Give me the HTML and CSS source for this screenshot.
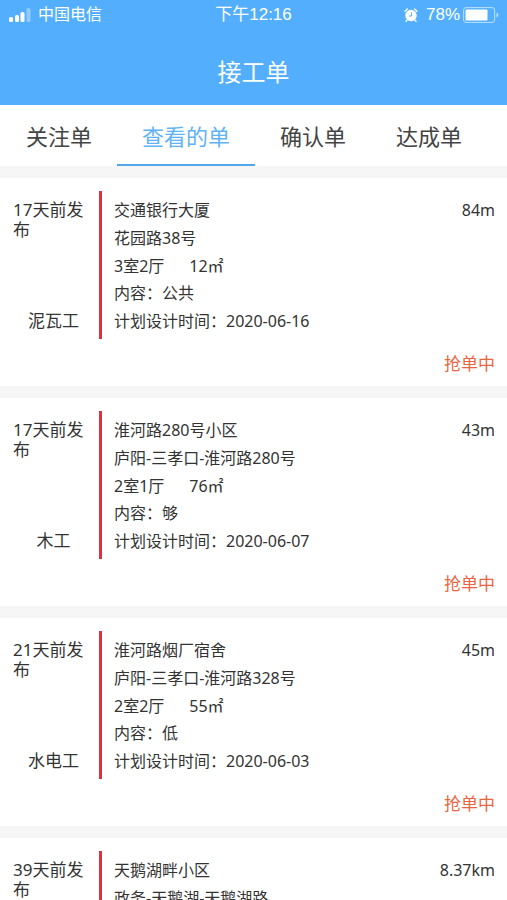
FILE: index.html
```html
<!DOCTYPE html>
<html lang="zh-CN">
<head>
    <meta charset="UTF-8">
    <meta name="viewport" content="width=device-width, initial-scale=1.0">
    <title>接工单</title>
    <link rel="stylesheet" href="styles.css">
</head>
<body>
    <div class="page">
        <header class="header">
            <div class="status-bar">
                <div class="carrier">
                    <svg class="signal" width="24" height="16" viewBox="0 0 24 16" fill="#fff">
                        <rect x="1" y="10" width="4" height="5" rx="1.5"/>
                        <rect x="7" y="8" width="4" height="7" rx="1.5"/>
                        <rect x="12.5" y="5" width="4" height="10" rx="1.5"/>
                        <rect x="18.5" y="1" width="4" height="14" rx="1.5" opacity=".35"/>
                    </svg>
                    <span>中国电信</span>
                </div>
                <span class="clock">下午12:16</span>
                <div class="power">
                    <svg class="alarm" width="14" height="14" viewBox="0 0 14 14">
                        <circle cx="7" cy="7.5" r="5.7" fill="#fff"/>
                        <path d="M1 3.2 3.4 1M13 3.2 10.6 1M3 12.2 2 13.4M11 12.2l1 1.2" stroke="#fff" stroke-width="1.4" stroke-linecap="round"/>
                        <path d="M7.6 4.4V8H4.8" fill="none" stroke="#53affe" stroke-width="1"/>
                    </svg>
                    <span class="percent">78%</span>
                    <svg class="battery" width="36" height="16" viewBox="0 0 36 16">
                        <rect x=".6" y=".6" width="31" height="14.8" rx="2.5" fill="none" stroke="#fff" stroke-opacity=".6"/>
                        <rect x="2.5" y="2.5" width="22" height="11" rx="1" fill="#fff"/>
                        <path d="M33.5 5.5c2.4.8 2.4 4.2 0 5z" fill="#fff" opacity=".6"/>
                    </svg>
                </div>
            </div>
            <h1 class="title">接工单</h1>
        </header>

        <nav class="tabs">
            <a href="#" class="tab">关注单</a>
            <a href="#" class="tab active">查看的单</a>
            <a href="#" class="tab">确认单</a>
            <a href="#" class="tab">达成单</a>
        </nav>

        <main class="list">
            <article class="card">
                <div class="card-body">
                    <div class="side">
                        <p>17天前发布</p>
                        <p class="job">泥瓦工</p>
                    </div>
                    <div class="info">
                        <p>交通银行大厦</p>
                        <p>花园路38号</p>
                        <p>3室2厅<span class="area">12㎡</span></p>
                        <p>内容：公共</p>
                        <p>计划设计时间：2020-06-16</p>
                    </div>
                    <span class="distance">84m</span>
                </div>
                <p class="state">抢单中</p>
            </article>

            <article class="card">
                <div class="card-body">
                    <div class="side">
                        <p>17天前发布</p>
                        <p class="job">木工</p>
                    </div>
                    <div class="info">
                        <p>淮河路280号小区</p>
                        <p>庐阳-三孝口-淮河路280号</p>
                        <p>2室1厅<span class="area">76㎡</span></p>
                        <p>内容：够</p>
                        <p>计划设计时间：2020-06-07</p>
                    </div>
                    <span class="distance">43m</span>
                </div>
                <p class="state">抢单中</p>
            </article>

            <article class="card">
                <div class="card-body">
                    <div class="side">
                        <p>21天前发布</p>
                        <p class="job">水电工</p>
                    </div>
                    <div class="info">
                        <p>淮河路烟厂宿舍</p>
                        <p>庐阳-三孝口-淮河路328号</p>
                        <p>2室2厅<span class="area">55㎡</span></p>
                        <p>内容：低</p>
                        <p>计划设计时间：2020-06-03</p>
                    </div>
                    <span class="distance">45m</span>
                </div>
                <p class="state">抢单中</p>
            </article>

            <article class="card">
                <div class="card-body">
                    <div class="side">
                        <p>39天前发布</p>
                    </div>
                    <div class="info brief">
                        <p>天鹅湖畔小区</p>
                        <p>政务-天鹅湖-天鹅湖路</p>
                    </div>
                    <span class="distance">8.37km</span>
                </div>
            </article>
        </main>
    </div>
</body>
</html>
```
FILE: styles.css
```css
* {
    box-sizing: border-box;
}
body {
    margin: 0;
    background: #f6f6f6;
    color: #333;
    font-family: "Noto Sans", "Noto Sans CJK SC", sans-serif;
    font-size: 16px;
    line-height: 20px;
}
p, h1 {
    margin: 0;
}
.page {
    display: flex;
    flex-direction: column;
    height: 100vh;
}

/* header */
.header {
    flex: none;
    background: #53affe;
    color: #fff;
}
.status-bar {
    display: grid;
    grid-template-columns: 1fr auto 1fr;
    align-items: center;
    height: 30px;
    padding: 0 8px;
    font-family: "Liberation Sans", "Noto Sans CJK SC", sans-serif;
}
.carrier, .power {
    display: flex;
    align-items: center;
}
.carrier {
    gap: 6px;
}
.power {
    justify-content: flex-end;
    gap: 3px;
}
.clock, .percent {
    font-size: 17px;
}
.alarm {
    margin-right: 5px;
}
.title {
    padding: 27px 0 18px;
    font-size: 24px;
    font-weight: 400;
    line-height: 30px;
    text-align: center;
}

/* tabs */
.tabs {
    display: flex;
    flex: none;
    padding-left: 1px;
    background: #fff;
}
.tab {
    padding: 16px 25px 13px;
    border-bottom: 2px solid transparent;
    color: #444;
    font-size: 22px;
    line-height: 30px;
    text-decoration: none;
    white-space: nowrap;
}
.tab.active {
    border-color: #53a5ec;
    color: #62b3f5;
}

/* order list */
.list {
    flex: 1;
    min-height: 0;
    overflow-y: auto;
    scrollbar-width: none;
}
.card {
    margin-top: 12px;
    padding: 13px 12px 12px;
    background: #fff;
}
.card-body {
    display: flex;
    min-height: 148px;
}
.side {
    display: flex;
    flex-direction: column;
    justify-content: space-between;
    width: 87px;
    padding: 9px 5px 8px 1px;
    font-size: 17px;
}
.job {
    text-align: center;
}
.info {
    display: flex;
    flex: 1;
    flex-direction: column;
    justify-content: space-between;
    padding: 9px 0 8px 12px;
    border-left: 3px solid #dc323a;
}
.info.brief {
    justify-content: flex-start;
    gap: 8px;
}
.area {
    margin-left: 25px;
}
.distance {
    padding-top: 9px;
}
.state {
    padding-top: 15px;
    color: #e9653f;
    font-size: 17px;
    text-align: right;
}
```
